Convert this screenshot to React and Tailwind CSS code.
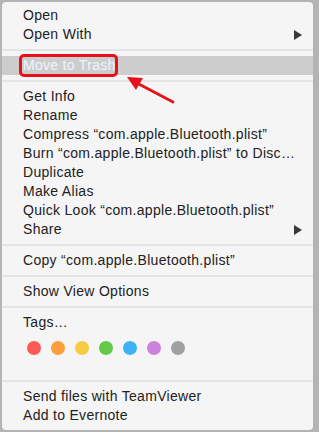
const Row = ({ label, submenu }) => (
  <div className="h-[19px] flex items-center justify-between pl-[21px] pr-[11px] leading-[19px]">
    <span>{label}</span>
    {submenu && (
      <svg width="8" height="10" viewBox="0 0 8 10" className="text-[#3a3a3a]">
        <path d="M0 0 L8 5 L0 10 Z" fill="currentColor" />
      </svg>
    )}
  </div>
);

const Sep = () => (
  <div className="h-[12px] flex items-center">
    <div className="w-full h-[2px] bg-[#e4e4e4]"></div>
  </div>
);

const tagColors = ["bg-[#fe5b57]", "bg-[#fc9e3b]", "bg-[#f5cc42]", "bg-[#63c94a]", "bg-[#3db3f6]", "bg-[#cd81dd]", "bg-[#a0a0a0]"];

export default function App() {
  return (
    <div className="w-[319px] h-[432px] bg-[#b4b4b4] pt-[2px] pl-[2px] pr-[6px] pb-[2px]">
      <div
        className="relative h-full bg-[#f5f5f5] rounded-[4px] pt-[4px] text-[14px] tracking-[0.3px] text-[#222222]"
        style={{ fontFamily: '"Liberation Sans", Arial, sans-serif' }}
      >
        <Row label="Open" />
        <Row label="Open With" submenu />
        <Sep />
        <div className="relative h-[19px] flex items-center pl-[21px] bg-[#cdcdcd] text-[#eef4ff]">
          <span>Move to Trash</span>
          <div className="absolute left-[17px] top-[-2px] w-[99px] h-[23px] border-[3px] border-[#e8101a] rounded-[5px]"></div>
        </div>
        <Sep />
        <Row label="Get Info" />
        <Row label="Rename" />
        <Row label="Compress “com.apple.Bluetooth.plist”" />
        <Row label="Burn “com.apple.Bluetooth.plist” to Disc…" />
        <Row label="Duplicate" />
        <Row label="Make Alias" />
        <Row label="Quick Look “com.apple.Bluetooth.plist”" />
        <Row label="Share" submenu />
        <Sep />
        <Row label="Copy “com.apple.Bluetooth.plist”" />
        <Sep />
        <Row label="Show View Options" />
        <Sep />
        <Row label="Tags…" />
        <div className="h-[43px] pt-[9px] pl-[25px] flex items-start gap-[10px]">
          {tagColors.map((c) => (
            <div key={c} className={`w-[14px] h-[14px] rounded-full ${c}`}></div>
          ))}
        </div>
        <Sep />
        <Row label="Send files with TeamViewer" />
        <Row label="Add to Evernote" />

        {/* red arrow annotation */}
        <svg className="absolute left-[120px] top-[70px]" width="60" height="36" viewBox="0 0 60 36">
          <line x1="51" y1="30" x2="13" y2="10" stroke="#e8101a" strokeWidth="2.8" strokeLinecap="round" />
          <path d="M5 5 L21 6 L14 18 Z" fill="#e8101a" />
        </svg>
      </div>
    </div>
  );
}
